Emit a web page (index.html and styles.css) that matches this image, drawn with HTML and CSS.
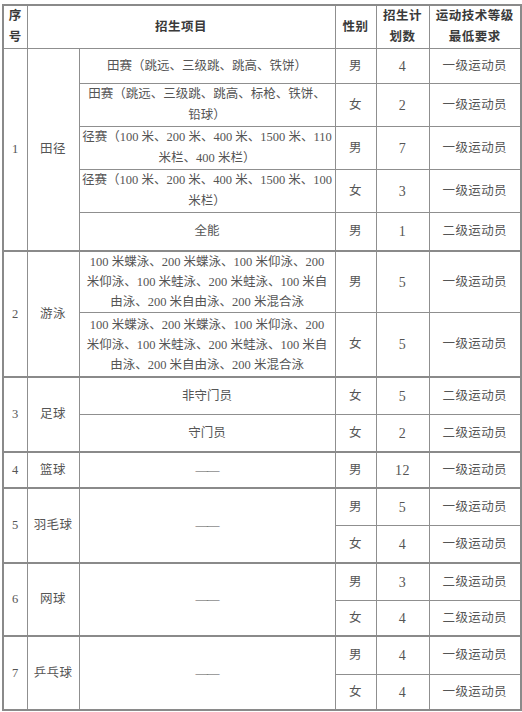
FILE: index.html
```html
<!DOCTYPE html>
<html lang="zh-CN">
<head>
<meta charset="utf-8">
<link rel="stylesheet" href="styles.css">
</head>
<body>
<table class="tbl">
  <colgroup>
    <col class="c-no"><col class="c-sport"><col class="c-item"><col class="c-sex"><col class="c-num"><col class="c-lvl">
  </colgroup>
  <thead>
    <tr class="hh">
      <th>序<br>号</th>
      <th colspan="2">招生项目</th>
      <th>性别</th>
      <th>招生计<br>划数</th>
      <th>运动技术等级<br>最低要求</th>
    </tr>
  </thead>
  <tbody>
    <tr class="h35">
      <td rowspan="5">1</td>
      <td rowspan="5">田径</td>
      <td class="item">田赛（跳远、三级跳、跳高、铁饼）</td>
      <td>男</td><td class="num">4</td><td>一级运动员</td>
    </tr>
    <tr class="h44">
      <td class="item">田赛（跳远、三级跳、跳高、标枪、铁饼、<br>铅球）</td>
      <td>女</td><td class="num">2</td><td>一级运动员</td>
    </tr>
    <tr class="h43">
      <td class="item nw">径赛（100 米、200 米、400 米、1500 米、110<br>米栏、400 米栏）</td>
      <td>男</td><td class="num">7</td><td>一级运动员</td>
    </tr>
    <tr class="h43">
      <td class="item nw">径赛（100 米、200 米、400 米、1500 米、100<br>米栏）</td>
      <td>女</td><td class="num">3</td><td>一级运动员</td>
    </tr>
    <tr class="h38">
      <td class="item">全能</td>
      <td>男</td><td class="num">1</td><td>二级运动员</td>
    </tr>

    <tr class="h62 grp">
      <td rowspan="2">2</td>
      <td rowspan="2">游泳</td>
      <td class="item nw swim">100 米蝶泳、200 米蝶泳、100 米仰泳、200<br>米仰泳、100 米蛙泳、200 米蛙泳、100 米自<br>由泳、200 米自由泳、200 米混合泳</td>
      <td>男</td><td class="num">5</td><td>一级运动员</td>
    </tr>
    <tr class="h65">
      <td class="item nw swim">100 米蝶泳、200 米蝶泳、100 米仰泳、200<br>米仰泳、100 米蛙泳、200 米蛙泳、100 米自<br>由泳、200 米自由泳、200 米混合泳</td>
      <td>女</td><td class="num">5</td><td>一级运动员</td>
    </tr>

    <tr class="h37 grp">
      <td rowspan="2">3</td>
      <td rowspan="2">足球</td>
      <td class="item">非守门员</td>
      <td>女</td><td class="num">5</td><td>二级运动员</td>
    </tr>
    <tr class="h37">
      <td class="item">守门员</td>
      <td>女</td><td class="num">2</td><td>二级运动员</td>
    </tr>

    <tr class="h36 grp">
      <td>4</td>
      <td>篮球</td>
      <td class="item dash">——</td>
      <td>男</td><td class="num">12</td><td>一级运动员</td>
    </tr>

    <tr class="h37 grp">
      <td rowspan="2">5</td>
      <td rowspan="2">羽毛球</td>
      <td rowspan="2" class="item dash">——</td>
      <td>男</td><td class="num">5</td><td>一级运动员</td>
    </tr>
    <tr class="h37">
      <td>女</td><td class="num">4</td><td>一级运动员</td>
    </tr>

    <tr class="h37 grp">
      <td rowspan="2">6</td>
      <td rowspan="2">网球</td>
      <td rowspan="2" class="item dash">——</td>
      <td>男</td><td class="num">3</td><td>二级运动员</td>
    </tr>
    <tr class="h36">
      <td>女</td><td class="num">4</td><td>二级运动员</td>
    </tr>

    <tr class="h38 grp">
      <td rowspan="2">7</td>
      <td rowspan="2">乒乓球</td>
      <td rowspan="2" class="item dash">——</td>
      <td>男</td><td class="num">4</td><td>一级运动员</td>
    </tr>
    <tr class="h36">
      <td>女</td><td class="num">4</td><td>一级运动员</td>
    </tr>
  </tbody>
</table>
</body>
</html>
```

FILE: styles.css
```css
html, body {
  margin: 0;
  padding: 0;
  background: #ffffff;
}
body {
  padding: 4px 2px 0 2px;
}
.tbl {
  border-collapse: collapse;
  table-layout: fixed;
  width: 518px;
  font-family: "Liberation Serif", "Noto Sans CJK SC", serif;
  font-size: 12.5px;
  color: #555555;
  border: 2px solid #8a8a8a;
}
.c-no { width: 24px; }
.c-sport { width: 52px; }
.c-item { width: 256px; }
.c-sex { width: 41px; }
.c-num { width: 53px; }
.c-lvl { width: 92px; }

.tbl th, .tbl td {
  border: 1px solid #8f8f8f;
  padding: 0 2px;
  text-align: center;
  vertical-align: middle;
  line-height: 21px;
  letter-spacing: 0.4px;
}
.tbl th {
  font-weight: 700;
  color: #3a3a3a;
  line-height: 21px;
  letter-spacing: 0.5px;
}
.tbl td.item {
  letter-spacing: 0;
}
.tbl td.nw {
  white-space: nowrap;
}
.tbl td.swim {
  line-height: 20px;
}
.tbl td.num {
  font-size: 14px;
}
.tbl td.dash {
  letter-spacing: -1px;
  color: #555555;
}
.tbl tr.grp td {
  border-top: 2px solid #8a8a8a;
}

.hh th { height: 42px; }
.h35 th, .h35 td { height: 34px; }
.h36 th, .h36 td { height: 34px; }
.h37 th, .h37 td { height: 36px; }
.h38 th, .h38 td { height: 37px; }
.h43 th, .h43 td { height: 42px; }
.h44 th, .h44 td { height: 42px; }
.h62 th, .h62 td { height: 60px; }
.h65 th, .h65 td { height: 63px; }
```
